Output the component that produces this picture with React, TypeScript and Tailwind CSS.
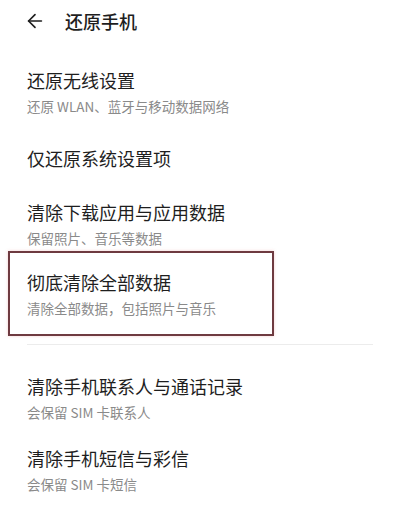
import { ArrowLeft } from 'lucide-react';

type Item = { title: string; desc?: string };

const groupA: Item[] = [
  { title: '还原无线设置', desc: '还原 WLAN、蓝牙与移动数据网络' },
  { title: '仅还原系统设置项' },
  { title: '清除下载应用与应用数据', desc: '保留照片、音乐等数据' },
];

const groupB: Item[] = [
  { title: '清除手机联系人与通话记录', desc: '会保留 SIM 卡联系人' },
  { title: '清除手机短信与彩信', desc: '会保留 SIM 卡短信' },
];

function Row({ item }: { item: Item }) {
  if (!item.desc) {
    return (
      <div className="h-[60px] px-[27px] flex items-center">
        <div className="text-[18px] leading-[24px] text-[#1e1e1e]">{item.title}</div>
      </div>
    );
  }
  return (
    <div className="px-[27px] py-[12px]">
      <div className="text-[18px] leading-[24px] text-[#1e1e1e]">{item.title}</div>
      <div className="mt-[4px] text-[13.5px] leading-[20px] text-[#8a8a8a]">{item.desc}</div>
    </div>
  );
}

export default function App() {
  return (
    <div
      className="w-[400px] h-[506px] bg-white overflow-hidden"
      style={{ fontFamily: '"Noto Sans CJK SC", "Noto Sans", sans-serif' }}
    >
      {/* Header */}
      <div className="h-[42px] flex items-center pl-[24px]">
        <ArrowLeft size={22} strokeWidth={1.8} className="text-[#1e1e1e]" />
        <span className="ml-[19px] text-[18px] font-medium text-[#1e1e1e]">还原手机</span>
      </div>

      <div className="mt-[14px]">
        {groupA.map((item) => (
          <Row key={item.title} item={item} />
        ))}

        {/* Highlighted item */}
        <div className="relative px-[27px] pt-[10px] pb-[12px]">
          <div className="absolute left-[8px] top-[-9px] w-[266px] h-[85px] border-2 border-[#6e3a40] shadow-[0_0_3px_rgba(230,120,120,0.35)]" />
          <div className="text-[18px] leading-[24px] text-[#1e1e1e]">彻底清除全部数据</div>
          <div className="mt-[4px] text-[13.5px] leading-[20px] text-[#8a8a8a]">清除全部数据，包括照片与音乐</div>
        </div>

        <div className="mx-[27px] mt-[14px] border-t border-[#ececec]" />

        <div className="mt-[17px]">
          {groupB.map((item) => (
            <Row key={item.title} item={item} />
          ))}
        </div>
      </div>
    </div>
  );
}
